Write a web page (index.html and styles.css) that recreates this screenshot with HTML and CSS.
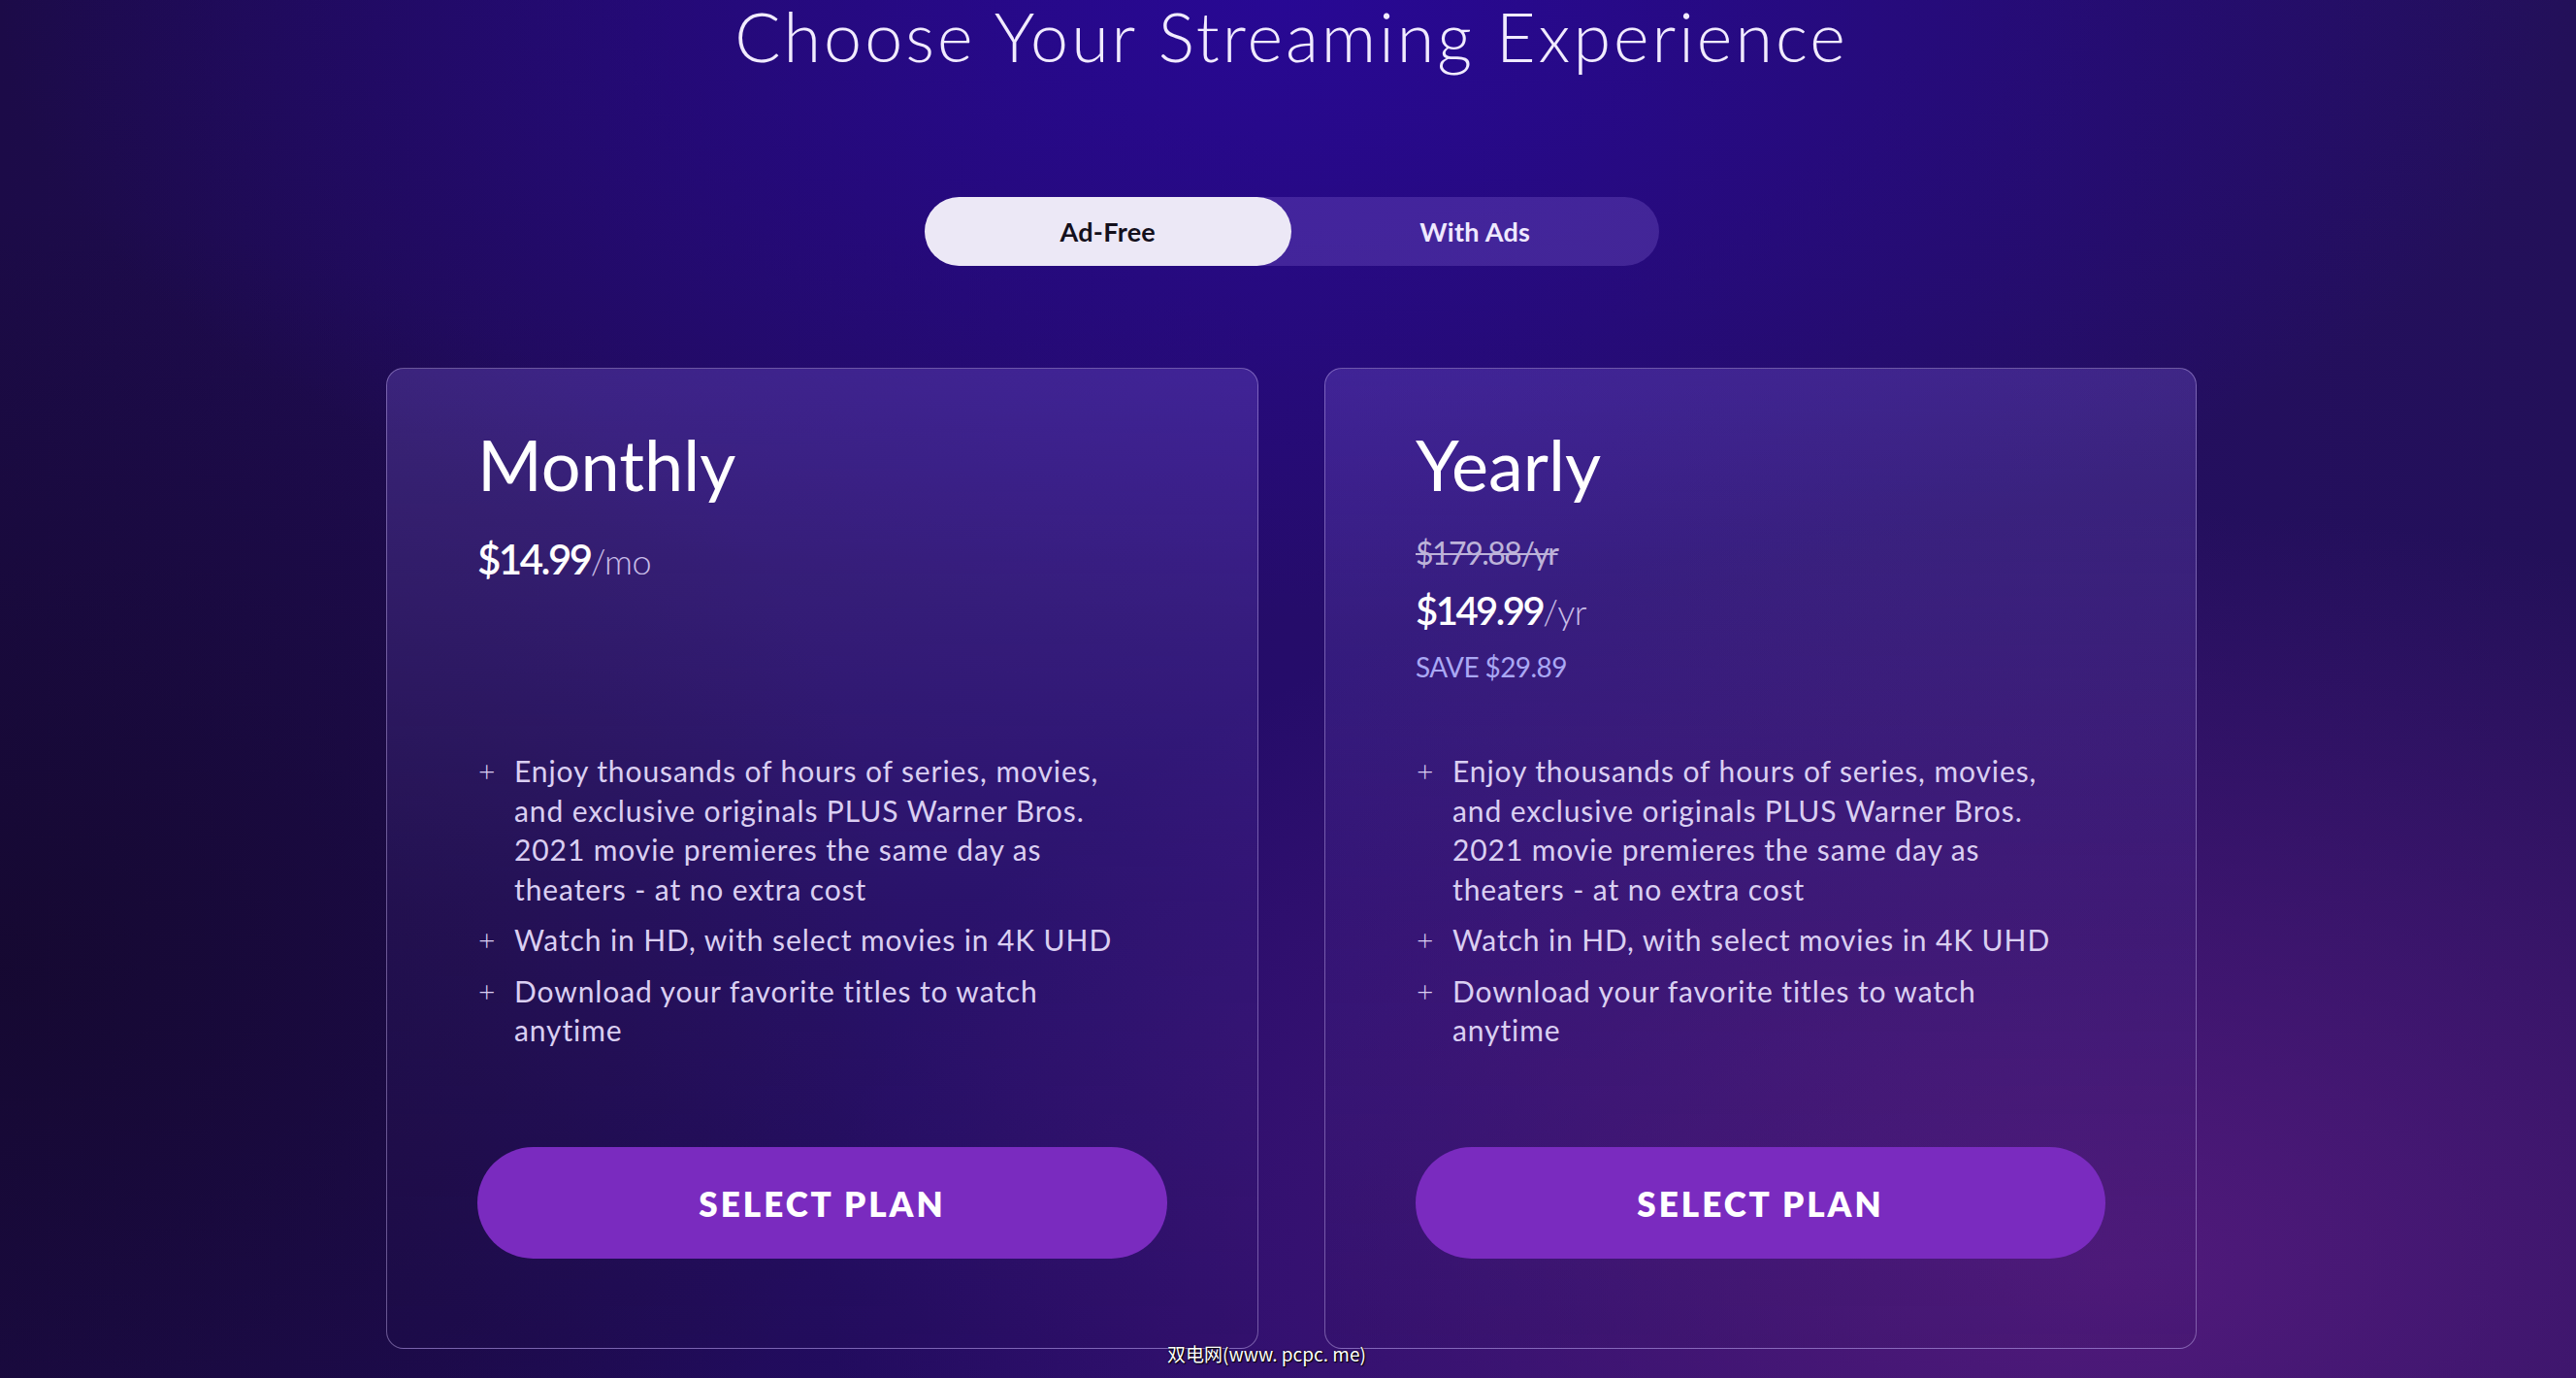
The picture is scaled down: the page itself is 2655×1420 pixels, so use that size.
FILE: index.html
```html
<!DOCTYPE html>
<html lang="en">
<head>
<meta charset="utf-8">
<title>Choose Your Streaming Experience</title>
<link rel="stylesheet" href="styles.css">
</head>
<body>
<main class="page">
  <h1 class="title">Choose Your Streaming Experience</h1>

  <div class="toggle">
    <button class="toggle-opt active">Ad-Free</button>
    <button class="toggle-opt">With Ads</button>
  </div>

  <section class="plans">
    <article class="card">
      <h2 class="plan-name">Monthly</h2>
      <div class="pricing">
        <p class="price"><span class="amount">$14.99</span><span class="per">/mo</span></p>
      </div>
      <ul class="features">
        <li><span class="plus">+</span><span>Enjoy thousands of hours of series, movies, and exclusive originals PLUS Warner Bros. 2021 movie premieres the same day as theaters - at no extra cost</span></li>
        <li><span class="plus">+</span><span>Watch in HD, with select movies in 4K UHD</span></li>
        <li><span class="plus">+</span><span>Download your favorite titles to watch anytime</span></li>
      </ul>
      <button class="select">SELECT PLAN</button>
    </article>

    <article class="card">
      <h2 class="plan-name">Yearly</h2>
      <div class="pricing">
        <p class="old-price">$179.88/yr</p>
        <p class="price price-yearly"><span class="amount">$149.99</span><span class="per">/yr</span></p>
        <p class="save">SAVE $29.89</p>
      </div>
      <ul class="features">
        <li><span class="plus">+</span><span>Enjoy thousands of hours of series, movies, and exclusive originals PLUS Warner Bros. 2021 movie premieres the same day as theaters - at no extra cost</span></li>
        <li><span class="plus">+</span><span>Watch in HD, with select movies in 4K UHD</span></li>
        <li><span class="plus">+</span><span>Download your favorite titles to watch anytime</span></li>
      </ul>
      <button class="select">SELECT PLAN</button>
    </article>
  </section>

  <div class="watermark">双电网(www. pcpc. me)</div>
</main>
</body>
</html>
```

FILE: styles.css
```css
* { box-sizing: border-box; }

html, body {
  margin: 0;
  padding: 0;
  height: 100%;
}

body {
  font-family: "Lato", "Noto Sans", sans-serif;
  color: #f1ecff;
  overflow: hidden;
  background:
    radial-gradient(ellipse 50% 45% at 50% 0%, rgba(40, 8, 150, 0.95) 0%, rgba(40, 8, 150, 0) 100%),
    radial-gradient(ellipse 50% 55% at 82% 92%, rgba(88, 28, 128, 0.85) 0%, rgba(88, 28, 128, 0) 100%),
    radial-gradient(ellipse 35% 55% at 0% 70%, rgba(20, 8, 44, 0.8) 0%, rgba(20, 8, 44, 0) 100%),
    linear-gradient(90deg, #1c0b48 0%, #250c6a 50%, #231059 100%);
}

.page {
  position: relative;
  height: 1420px;
  display: flex;
  flex-direction: column;
  align-items: center;
  padding-left: 7px;
}

.title {
  margin: 0;
  font-size: 70px;
  line-height: 74px;
  font-weight: 300;
  color: #f1ebff;
  letter-spacing: 3px;
}

.toggle {
  margin-top: 129px;
  width: 757px;
  height: 71px;
  display: grid;
  grid-template-columns: 1fr 1fr;
  border-radius: 36px;
  background: rgba(120, 90, 200, 0.35);
}

.toggle-opt {
  border: 0;
  border-radius: 36px;
  background: transparent;
  font-family: "Lato", "Noto Sans", sans-serif;
  font-weight: 700;
  font-size: 27px;
  letter-spacing: 0.3px;
  color: #efe9ff;
  cursor: pointer;
}

.toggle-opt.active {
  background: #ece8f6;
  color: #14101c;
}

.plans {
  margin-top: 105px;
  display: grid;
  grid-template-columns: 899px 899px;
  gap: 68px;
}

.card {
  height: 1011px;
  border: 1.5px solid rgba(200, 180, 240, 0.45);
  border-radius: 18px;
  padding: 55px 93px 92px;
  display: flex;
  flex-direction: column;
  background: linear-gradient(180deg, rgba(120, 90, 210, 0.32) 0%, rgba(90, 60, 170, 0.14) 55%, rgba(40, 20, 80, 0.08) 100%);
}

.plan-name {
  margin: 0;
  font-size: 72px;
  line-height: 86px;
  font-weight: 400;
  color: #ffffff;
}

.pricing {
  margin-top: 30px;
  height: 223px;
}

.pricing p { margin: 0; }

.price {
  font-size: 42px;
  line-height: 50px;
}

.amount {
  font-weight: 600;
  color: #ffffff;
  letter-spacing: -2.5px;
}

.per {
  font-weight: 300;
  color: #c9bde8;
  font-size: 36px;
  margin-left: 0;
  letter-spacing: -0.5px;
}

.old-price {
  font-size: 32px;
  line-height: 38px;
  color: #bdb3d9;
  letter-spacing: -1.5px;
  text-decoration: line-through;
  text-decoration-thickness: 2px;
}

.price-yearly {
  margin-top: 16px !important;
  font-size: 40px;
  line-height: 48px;
}

.save {
  margin-top: 16px !important;
  font-size: 28px;
  line-height: 34px;
  color: #aaa8f4;
  letter-spacing: -0.6px;
}

.features {
  margin: 0;
  padding: 0;
  list-style: none;
  display: flex;
  flex-direction: column;
  gap: 12px;
  font-size: 30px;
  line-height: 40.5px;
  letter-spacing: 0.9px;
  color: #dacff2;
}

.features li {
  display: grid;
  grid-template-columns: 38px 1fr;
  padding-right: 40px;
}

.plus {
  font-weight: 300;
  padding-left: 1px;
}

.select {
  margin-top: auto;
  width: 100%;
  height: 115px;
  border: 0;
  border-radius: 58px;
  background: #7a2bbf;
  color: #ffffff;
  font-family: "Lato", "Noto Sans", sans-serif;
  font-weight: 800;
  font-size: 35px;
  letter-spacing: 3px;
  cursor: pointer;
}

.watermark {
  position: absolute;
  left: 1203px;
  top: 1383px;
  font-family: "Noto Sans CJK SC", "Liberation Sans", sans-serif;
  font-size: 19px;
  line-height: 24px;
  color: #ffffff;
  text-shadow: 1px 1px 1px #000, 0 0 2px #000;
}
```
